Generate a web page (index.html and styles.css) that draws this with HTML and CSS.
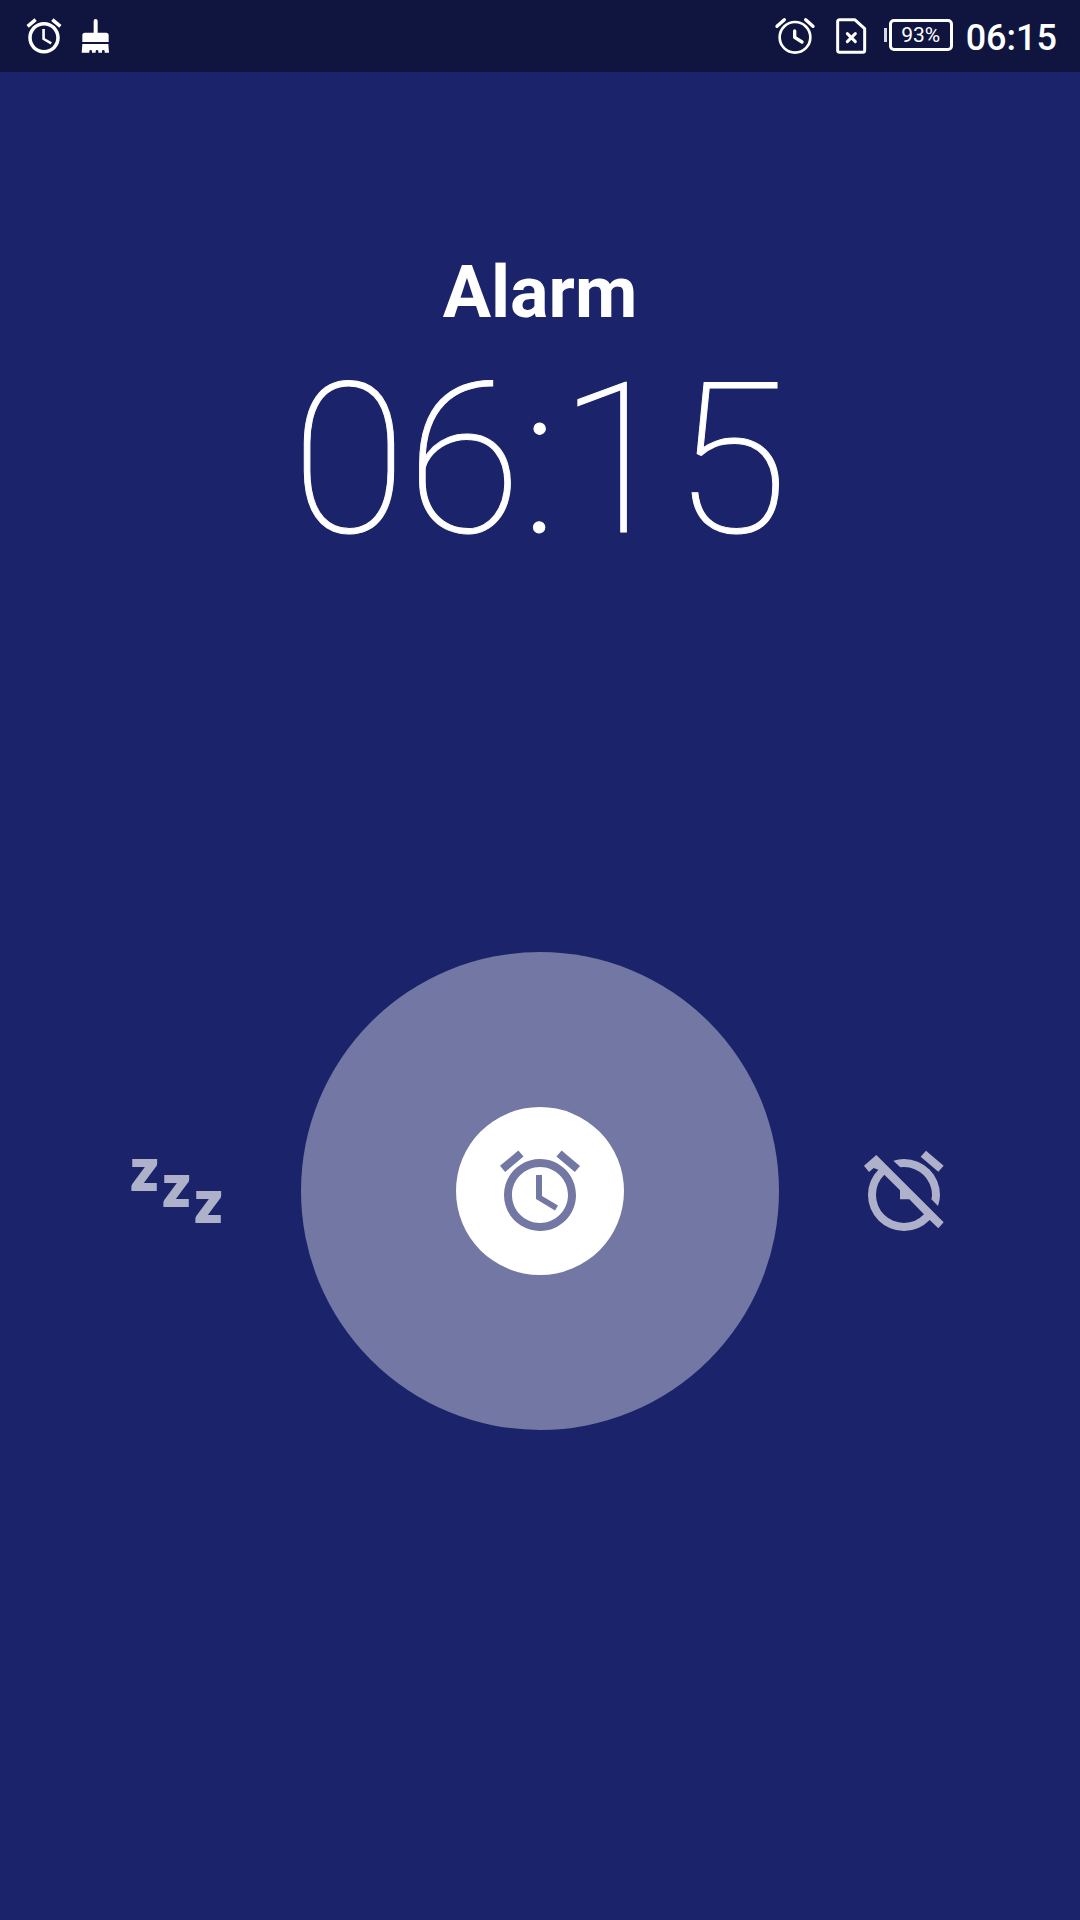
FILE: index.html
```html
<!DOCTYPE html>
<html lang="en">
<head>
<meta charset="utf-8">
<meta name="viewport" content="width=device-width, initial-scale=1">
<title>Alarm</title>
<link rel="stylesheet" href="styles.css">
</head>
<body class="screen">
  <header class="status-bar">
    <div class="status-group">
      <svg class="icon-alarm-small" viewBox="0 0 24 24" aria-hidden="true">
        <path d="M22 5.72l-4.6-3.86-1.29 1.53 4.6 3.86L22 5.72zM7.88 3.39L6.6 1.86 2 5.71l1.29 1.53 4.59-3.85zM12.5 8H11v6l4.75 2.85.75-1.23-4-2.37V8zM12 4c-4.97 0-9 4.03-9 9s4.02 9 9 9c4.97 0 9-4.03 9-9s-4.03-9-9-9zm0 16c-3.87 0-7-3.13-7-7s3.13-7 7-7 7 3.13 7 7-3.13 7-7 7z" fill="currentColor"/>
      </svg>
      <svg class="icon-broom" viewBox="0 0 84 108" aria-hidden="true">
        <path d="M38 44V9a6 6 0 0 1 12 0v35h25q8 0 8 8v20H4V52q0-8 8-8zM4 78h78l2 26H71v-4q0-4-4-4t-4 4v4H52v-4q0-4-4-4t-4 4v4H33v-4q0-4-4-4t-4 4v4H2z" fill="currentColor"/>
      </svg>
    </div>
    <div class="status-group">
      <svg class="icon-alarm-line" viewBox="0 0 126 126" fill="none" stroke="currentColor" stroke-width="8" stroke-linecap="round" stroke-linejoin="round" aria-hidden="true">
        <circle cx="63" cy="67" r="46"/>
        <path d="M9 34L31 14M95 14L117 34" stroke-width="10"/>
        <path d="M62 48v19l22 14" stroke-width="10"/>
      </svg>
      <svg class="icon-sim" viewBox="0 0 108 126" fill="none" stroke="currentColor" stroke-width="9" stroke-linejoin="round" aria-hidden="true">
        <path d="M23 14H68L98 41V106q0 6-6 6H23q-6 0-6-6V20q0-6 6-6z"/>
        <path d="M46 56l24 24M70 56L46 80" stroke-linecap="round"/>
      </svg>
      <div class="status-power">
        <div class="battery"><span class="battery-nub"></span><span class="battery-body">93%</span></div>
        <time class="status-clock">06:15</time>
      </div>
    </div>
  </header>

  <main class="alarm">
    <h1 class="alarm-label">Alarm</h1>
    <time class="alarm-time">06:15</time>
    <div class="alarm-actions">
      <button class="action" type="button" aria-label="Snooze">
        <svg class="action-icon" viewBox="0 0 96 96" aria-hidden="true">
          <g class="snooze-letters">
            <text x="3" y="47">z</text>
            <text x="35" y="63">z</text>
            <text x="67" y="79">z</text>
          </g>
        </svg>
      </button>
      <div class="halo">
        <button class="handle" type="button" aria-label="Alarm handle">
          <svg class="action-icon" viewBox="0 0 24 24" aria-hidden="true">
            <path d="M22 5.72l-4.6-3.86-1.29 1.53 4.6 3.86L22 5.72zM7.88 3.39L6.6 1.86 2 5.71l1.29 1.53 4.59-3.85zM12.5 8H11v6l4.75 2.85.75-1.23-4-2.37V8zM12 4c-4.97 0-9 4.03-9 9s4.02 9 9 9c4.97 0 9-4.03 9-9s-4.03-9-9-9zm0 16c-3.87 0-7-3.13-7-7s3.13-7 7-7 7 3.13 7 7-3.13 7-7 7z" fill="currentColor"/>
          </svg>
        </button>
      </div>
      <button class="action" type="button" aria-label="Dismiss">
        <svg class="action-icon" viewBox="0 0 288 288" fill="currentColor" aria-hidden="true">
          <path d="M210 23L263 68 247 86 194 41z"/>
          <path d="M112 53Q128 48 144 48A108 108 0 0 1 252 156Q252 172 246 189L226 169Q228 162 228 156A84 84 0 0 0 144 72Q138 72 133 73z"/>
          <path fill-rule="evenodd" d="M61 36L263 238 247 256 221 231A108 108 0 0 1 144 264A108 108 0 0 1 36 156A108 108 0 0 1 67 80L53 75 39 87 24 68zM85 95A84 84 0 0 0 60 156A84 84 0 0 0 144 240A84 84 0 0 0 204 214L160 169H132V142z"/>
        </svg>
      </button>
    </div>
  </main>
</body>
</html>
```

FILE: styles.css
```css
* {
  box-sizing: border-box;
}

.screen {
  display: flex;
  flex-direction: column;
  min-height: 100vh;
  margin: 0;
  background: #1b236a;
  color: #fff;
  font-family: Roboto, "Liberation Sans", sans-serif;
}

.status-bar {
  display: flex;
  align-items: center;
  justify-content: space-between;
  height: 72px;
  padding: 0 23px;
  background: #10153f;
}

.status-group {
  display: flex;
  align-items: center;
  gap: 16px;
}

.status-power {
  display: flex;
  align-items: center;
  gap: 13px;
}

.icon-alarm-small,
.icon-alarm-line {
  width: 42px;
  height: 42px;
}

.icon-broom {
  width: 28px;
  height: 36px;
}

.icon-sim {
  width: 36px;
  height: 42px;
}

.battery {
  display: flex;
  align-items: center;
  gap: 2px;
  padding-bottom: 3px;
}

.battery-nub {
  width: 3px;
  height: 14px;
  background: #d8d9e0;
}

.battery-body {
  width: 64px;
  height: 32px;
  border: 3px solid #fff;
  border-radius: 5px;
  font-size: 21px;
  line-height: 26px;
  text-align: center;
}

.status-clock {
  padding-top: 3px;
  font-size: 36px;
  font-weight: 500;
  line-height: 42px;
}

.alarm {
  display: flex;
  flex: 1;
  flex-direction: column;
  padding: 179px 128px 104px;
  text-align: center;
}

.alarm-label {
  margin: 0 0 20px;
  font-size: 72px;
  font-weight: 700;
  line-height: 84px;
}

.alarm-time {
  font-size: 210px;
  font-weight: 100;
  line-height: 210px;
  -webkit-text-stroke: 1px currentColor;
}

.alarm-actions {
  display: flex;
  flex: 1;
  align-items: center;
  justify-content: space-between;
}

.action,
.handle {
  display: grid;
  place-items: center;
  padding: 0;
  border: 0;
  background: none;
}

.action {
  color: #afb1cb;
}

.action-icon {
  width: 96px;
  height: 96px;
  overflow: visible;
}

.snooze-letters {
  fill: currentColor;
  stroke: currentColor;
  stroke-width: 2px;
  font-family: Lato, sans-serif;
  font-size: 58px;
  font-weight: 900;
}

.halo {
  display: grid;
  place-items: center;
  width: 478px;
  height: 478px;
  border-radius: 50%;
  background: #7277a4;
}

.handle {
  width: 168px;
  height: 168px;
  border-radius: 50%;
  background: #fff;
  color: #7277a4;
}
```
